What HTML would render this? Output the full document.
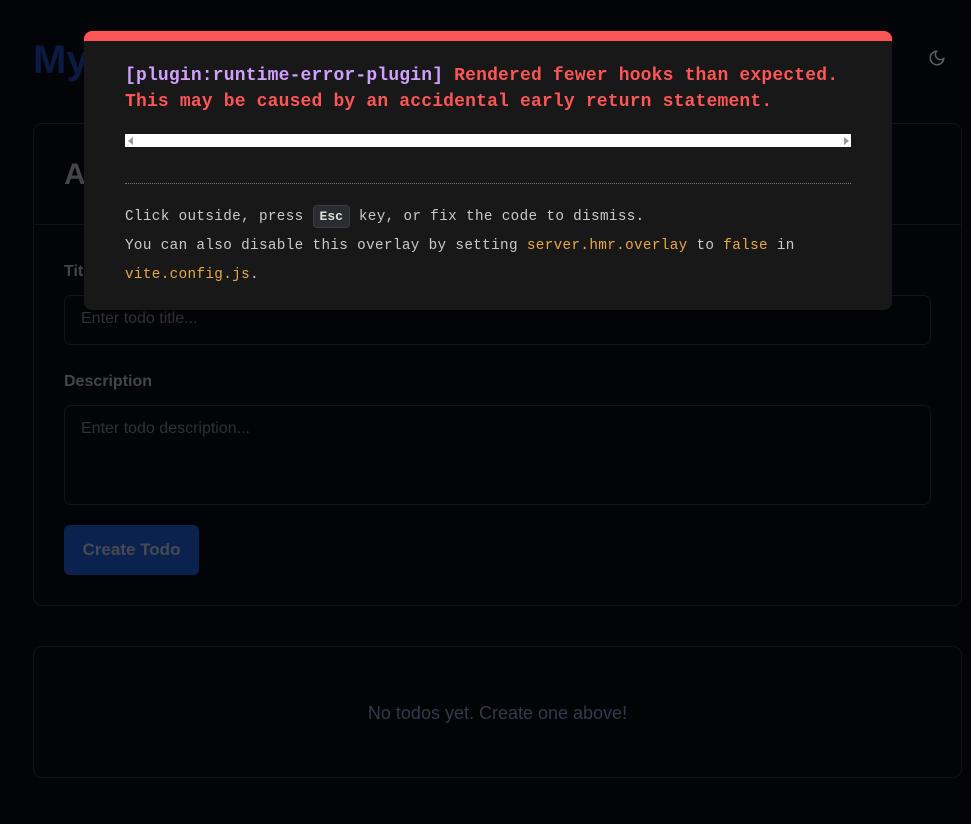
<!DOCTYPE html>
<html><head><style>
*{box-sizing:border-box;margin:0;padding:0}
body{width:971px;height:824px;background:#030408;font-family:"Liberation Sans","DejaVu Sans",sans-serif;position:relative;overflow:hidden}
.abs{position:absolute}
.card{position:absolute;left:33px;width:929px;border:1px solid #0f1217;border-radius:9px}
.lbl{position:absolute;left:64px;color:#444449;font-weight:bold;font-size:16px}
.inp{position:absolute;left:64px;width:867px;border:1px solid #11141a;border-radius:7px;color:#2e3138;font-size:16px;padding:14px 16px}
.ov{position:absolute;left:84px;top:31px;width:808px;height:279px;background:#181818;border-top:10px solid #ff5555;border-radius:8px;font-family:"Liberation Mono","DejaVu Sans Mono",monospace}
.msg{position:absolute;left:41px;top:22px;font-size:18px;font-weight:bold;line-height:26px;color:#ff5555;letter-spacing:0.17px;white-space:nowrap}
.tip{position:absolute;left:41px;font-size:14.3px;color:#c9c9c9;letter-spacing:0.35px;white-space:nowrap}
.y{color:#e8a846}
kbd{display:inline-block;background:#2a2c31;border:1px solid #3a3d44;border-radius:4px;padding:3px 6px;font-weight:bold;font-family:inherit;color:#ddd;font-size:13px;letter-spacing:0}
</style></head><body>
<div class="abs" style="left:33px;top:38px;font-size:40px;font-weight:bold;color:#0b1a42">My Todos</div>
<svg class="abs" style="left:928px;top:49px" width="18" height="18" viewBox="0 0 24 24" fill="none" stroke="#5e5e5e" stroke-width="2"><path d="M21 12.8A9 9 0 1 1 11.2 3a7 7 0 0 0 9.8 9.8z"/></svg>
<div class="card" style="top:123px;height:483px"></div>
<div class="abs" style="left:34px;top:224px;width:927px;height:1px;background:#0f1217"></div>
<div class="abs" style="left:64px;top:158px;font-size:30px;font-weight:bold;color:#444449">Add New Todo</div>
<div class="lbl" style="top:263px">Title</div>
<div class="inp" style="top:295px;height:50px">Enter todo title...</div>
<div class="lbl" style="top:373px">Description</div>
<div class="inp" style="top:405px;height:100px;padding-top:14px">Enter todo description...</div>
<div class="abs" style="left:64px;top:525px;width:135px;height:50px;background:#0b224e;border-radius:6px;color:#484a52;font-size:17px;font-weight:bold;text-align:center;line-height:50px">Create Todo</div>
<div class="card" style="top:646px;height:132px"></div>
<div class="abs" style="left:33px;width:929px;top:703px;text-align:center;color:#333946;font-size:18px">No todos yet. Create one above!</div>
<div class="ov">
<div class="msg"><span style="color:#cfa0ff">[plugin:runtime-error-plugin]</span> Rendered fewer hooks than expected.<br>This may be caused by an accidental early return statement.</div>
<div class="abs" style="left:41px;top:93px;width:726px;height:13px;background:#fff"><span class="abs" style="left:3px;top:3px;border:4px solid transparent;border-right:5px solid #999;border-left:0"></span><span class="abs" style="right:2px;top:3px;border:4px solid transparent;border-left:5px solid #999;border-right:0"></span></div>
<div class="abs" style="left:41px;top:142px;width:726px;border-top:1px dotted #777"></div>
<div class="tip" style="top:164px">Click outside, press <kbd>Esc</kbd> key, or fix the code to dismiss.</div>
<div class="tip" style="top:191px;line-height:29px">You can also disable this overlay by setting <span class="y">server.hmr.overlay</span> to <span class="y">false</span> in<br><span class="y">vite.config.js</span>.</div>
</div>
</body></html>
